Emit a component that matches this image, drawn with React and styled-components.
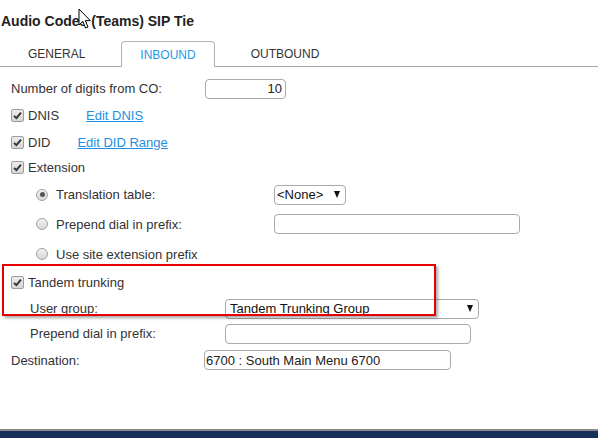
import React from "react";
import styled, { createGlobalStyle } from "styled-components";

const GlobalStyle = createGlobalStyle`
  html, body {
    margin: 0;
    padding: 0;
    height: 100%;
    background: #fff;
  }
  body {
    font-family: "Liberation Sans", Arial, sans-serif;
    font-size: 13px;
    color: #333;
  }
  #root {
    height: 100%;
  }
`;

const Page = styled.div`
  position: relative;
  height: 100vh;
  display: flex;
  flex-direction: column;
  overflow: hidden;
`;

const Main = styled.div`
  flex: 1;
`;

const Title = styled.h2`
  margin: 0;
  padding: 13px 0 0 1px;
  font-size: 14px;
  line-height: 16px;
  font-weight: bold;
  color: #222;
`;

const TabBar = styled.div`
  display: flex;
  gap: 17px;
  margin-top: 12px;
  padding-left: 9px;
  height: 25px;
  border-bottom: 1px solid #a8a8a8;
`;

const Tab = styled.div`
  display: flex;
  align-items: center;
  padding: 0 18px;
  height: ${(p) => (p.$active ? "26px" : "25px")};
  margin-top: ${(p) => (p.$active ? "-1px" : "0")};
  box-sizing: border-box;
  font-size: 12px;
  text-transform: uppercase;
  color: ${(p) => (p.$active ? "#1e9ae8" : "#333")};
  background: #fff;
  border: 1px solid ${(p) => (p.$active ? "#b4b4b4" : "transparent")};
  border-bottom: none;
  border-radius: 4px 4px 0 0;
  position: relative;
  top: ${(p) => (p.$active ? "1px" : "0")};
`;

const Form = styled.div`
  padding-top: 8px;
`;

const Row = styled.div`
  display: flex;
  align-items: center;
  height: ${(p) => p.$h}px;
  padding-left: ${(p) => p.$indent}px;
`;

const Label = styled.span`
  flex: none;
  width: ${(p) => (p.$w ? `${p.$w}px` : "auto")};
  color: #333;
`;

const EditLink = styled.a`
  margin-left: 27px;
  color: #1e8fe0;
  text-decoration: underline;
  cursor: pointer;
`;

const TextInput = styled.div`
  flex: none;
  box-sizing: border-box;
  width: ${(p) => p.$w}px;
  height: 20px;
  border: 1px solid #a9a9a9;
  border-radius: 4px;
  background: #fff;
  padding: 0 ${(p) => (p.$right ? "3px" : "1px")};
  display: flex;
  align-items: center;
  justify-content: ${(p) => (p.$right ? "flex-end" : "flex-start")};
  font-size: 13px;
  color: #222;
`;

const SelectBox = styled.div`
  flex: none;
  box-sizing: border-box;
  width: ${(p) => p.$w}px;
  height: 20px;
  border: 1px solid #a9a9a9;
  border-radius: 4px;
  background: #fff;
  padding: 0 5px 0 ${(p) => p.$pad}px;
  display: flex;
  align-items: center;
  justify-content: space-between;
  font-size: 13px;
  color: #111;
`;

const Arrow = styled.span`
  width: 0;
  height: 0;
  border-left: 3.5px solid transparent;
  border-right: 3.5px solid transparent;
  border-top: 7px solid #111;
`;

const CheckBox = styled.span`
  flex: none;
  box-sizing: border-box;
  width: 13px;
  height: 13px;
  margin-right: 4px;
  border: 1px solid #9c9c9c;
  border-radius: 2px;
  background: linear-gradient(#ececec, #d6d6d6);
  display: flex;
  align-items: center;
  justify-content: center;
`;

const Radio = styled.span`
  flex: none;
  box-sizing: border-box;
  width: 12px;
  height: 12px;
  margin-right: 8px;
  border: 1px solid #a4a4a4;
  border-radius: 50%;
  background: linear-gradient(#f2f2f2, #d8d8d8);
  display: flex;
  align-items: center;
  justify-content: center;
  &::after {
    content: "";
    display: ${(p) => (p.$on ? "block" : "none")};
    width: 5px;
    height: 5px;
    border-radius: 50%;
    background: #555;
  }
`;

const Highlight = styled.div`
  position: absolute;
  left: 2px;
  top: 264px;
  width: 434px;
  height: 52px;
  box-sizing: border-box;
  border: 2px solid #e60000;
  box-shadow: 2px 2px 3px rgba(0, 0, 0, 0.35);
  pointer-events: none;
`;

const Pointer = styled.svg`
  position: absolute;
  left: 78px;
  top: 8px;
`;

const Footer = styled.div`
  flex: none;
  height: 7px;
  border-top: 2px solid #8a8a8a;
  background: #17305a;
`;

const Check = () => (
  <CheckBox>
    <svg width="9" height="9" viewBox="0 0 9 9">
      <path d="M1 4.8 L3.4 7.2 L8 1.6" fill="none" stroke="#333" strokeWidth="1.9" />
    </svg>
  </CheckBox>
);

export default function App() {
  return (
    <Page>
      <GlobalStyle />
      <Main>
        <Title>Audio Codes (Teams) SIP Tie</Title>
        <TabBar>
          <Tab>General</Tab>
          <Tab $active>Inbound</Tab>
          <Tab>Outbound</Tab>
        </TabBar>

        <Form>
          <Row $h={27} $indent={11}>
            <Label $w={194}>Number of digits from CO:</Label>
            <TextInput $w={81} $right>10</TextInput>
          </Row>
          <Row $h={27} $indent={11}>
            <Check />
            <Label>DNIS</Label>
            <EditLink>Edit DNIS</EditLink>
          </Row>
          <Row $h={26} $indent={11}>
            <Check />
            <Label>DID</Label>
            <EditLink>Edit DID Range</EditLink>
          </Row>
          <Row $h={25} $indent={11}>
            <Check />
            <Label>Extension</Label>
          </Row>
          <Row $h={29} $indent={36}>
            <Radio $on />
            <Label $w={218}>Translation table:</Label>
            <SelectBox $w={72} $pad={2}>
              <span>&lt;None&gt;</span>
              <Arrow />
            </SelectBox>
          </Row>
          <Row $h={30} $indent={36}>
            <Radio />
            <Label $w={218}>Prepend dial in prefix:</Label>
            <TextInput $w={246} />
          </Row>
          <Row $h={30} $indent={36}>
            <Radio />
            <Label>Use site extension prefix</Label>
          </Row>
          <Row $h={27} $indent={11}>
            <Check />
            <Label>Tandem trunking</Label>
          </Row>
          <Row $h={25} $indent={30}>
            <Label $w={195}>User group:</Label>
            <SelectBox $w={254} $pad={4}>
              <span>Tandem Trunking Group</span>
              <Arrow />
            </SelectBox>
          </Row>
          <Row $h={25} $indent={30}>
            <Label $w={195}>Prepend dial in prefix:</Label>
            <TextInput $w={246} />
          </Row>
          <Row $h={28} $indent={11}>
            <Label $w={193}>Destination:</Label>
            <TextInput $w={247}>6700 : South Main Menu 6700</TextInput>
          </Row>
        </Form>
      </Main>
      <Footer />

      <Highlight />
      <Pointer width="14" height="22" viewBox="0 0 14 22">
        <path
          d="M1 1 L1 17 L4.8 13.4 L7.6 20 L10 19 L7.3 12.6 L12.3 12.6 Z"
          fill="#fff"
          stroke="#000"
          strokeWidth="1"
          strokeLinejoin="miter"
        />
      </Pointer>
    </Page>
  );
}
